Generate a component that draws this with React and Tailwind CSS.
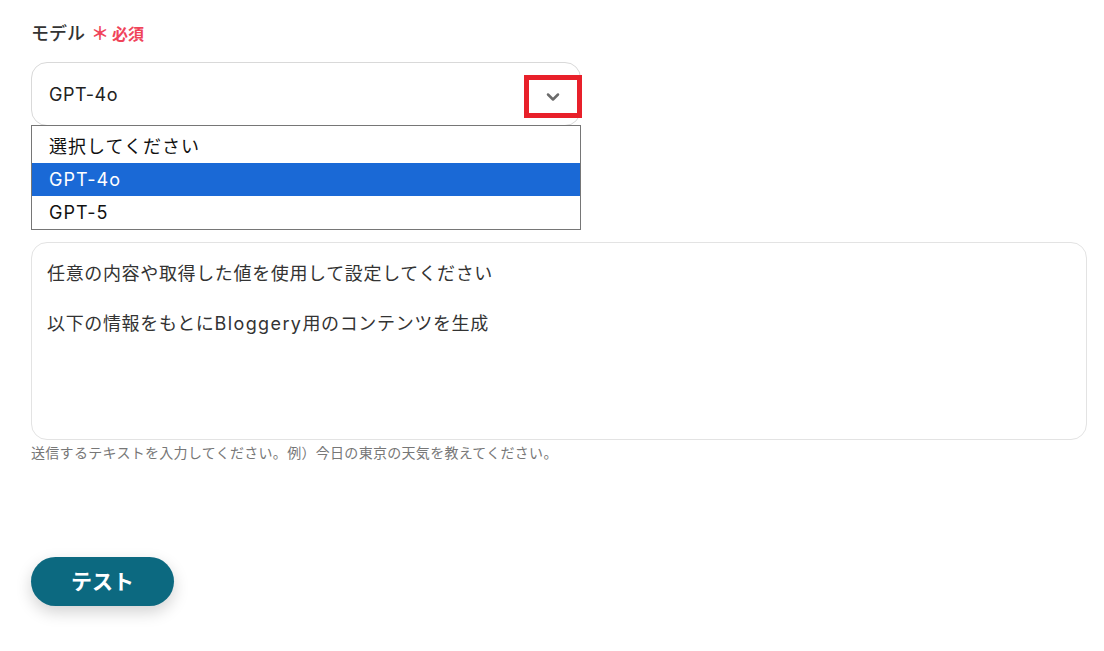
import { ChevronDown } from "lucide-react";

const font = { fontFamily: 'Inter, "Noto Sans CJK JP", "Noto Sans", sans-serif' };

function ModelSelect() {
  return (
    <div className="relative w-[550px]">
      <div className="flex h-[64px] items-center rounded-[16px] border border-[#d9d9d9] bg-white pl-[17px]">
        <span className="text-[18px] tracking-[0.5px] text-[#222]">GPT-4o</span>
      </div>
      {/* highlight box drawn over the select */}
      <div className="absolute left-[493px] top-[13px] flex h-[43px] w-[58px] items-center justify-center border-[5px] border-[#e8202a] bg-white">
        <ChevronDown className="h-[20px] w-[20px] text-[#6b6b6b]" strokeWidth={3} />
      </div>
      <ul className="absolute left-0 top-[63px] w-[550px] border border-[#767676] bg-white text-[18px] tracking-[1px] text-[#111]">
        <li className="flex h-[37px] items-center px-[17px] pt-[3px]">選択してください</li>
        <li className="flex h-[33px] items-center bg-[#1a69d6] px-[17px] text-white">GPT-4o</li>
        <li className="flex h-[33px] items-center px-[17px]">GPT-5</li>
      </ul>
    </div>
  );
}

export default function App() {
  return (
    <div className="min-h-[651px] bg-white px-[31px] pt-[20px]" style={font}>
      <div className="flex items-center gap-[6px]">
        <span className="text-[18px] font-medium text-[#333]">モデル</span>
        <span className="flex items-center gap-[3px] text-[16px] font-bold text-[#f0445a]">
          <span className="text-[18px] leading-none">＊</span>必須
        </span>
      </div>
      <div className="mt-[15px]">
        <ModelSelect />
      </div>
      <div className="mt-[116px] h-[198px] w-[1056px] rounded-[16px] border border-[#e3e3e3] bg-white px-[15px] pt-[18px] text-[18px] leading-[25px] tracking-[0.65px] text-[#333]">
        <p>任意の内容や取得した値を使用して設定してください</p>
        <p className="mt-[25px]">
          以下の情報をもとに<span className="tracking-[1.4px]">Bloggery</span>用のコンテンツを生成
        </p>
      </div>
      <p className="mt-[2px] text-[14px] tracking-[0.3px] text-[#777]">
        送信するテキストを入力してください。例）今日の東京の天気を教えてください。
      </p>
      <button className="mt-[94px] flex h-[49px] w-[143px] items-center justify-center rounded-full bg-[#0c6980] text-[21px] font-bold text-white shadow-[0_6px_16px_rgba(0,0,0,0.18)]">
        テスト
      </button>
    </div>
  );
}
